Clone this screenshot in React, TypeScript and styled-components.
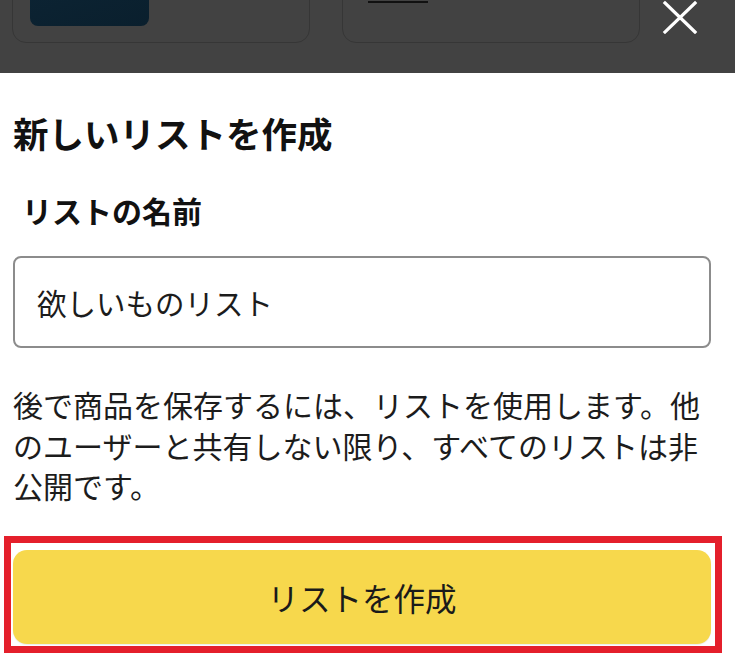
import React, { FC } from 'react';
import styled, { createGlobalStyle } from 'styled-components';

const GlobalStyle = createGlobalStyle`
  html, body {
    margin: 0;
    padding: 0;
    background: #ffffff;
  }
  body {
    font-family: "Noto Sans CJK JP", "Noto Sans", sans-serif;
    color: #111111;
  }
`;

const Backdrop = styled.div`
  display: flex;
  height: 73px;
  padding: 0 0 30px 12px;
  box-sizing: border-box;
  align-items: flex-end;
  background: #424242;
  overflow: hidden;
`;

const Card = styled.div`
  display: flex;
  width: 298px;
  height: 120px;
  flex-shrink: 0;
  margin-right: 32px;
  padding: 0 0 16px 17px;
  box-sizing: border-box;
  align-items: flex-end;
  border: 1.5px solid #363636;
  border-radius: 14px;
`;

const Thumb = styled.div`
  width: 119px;
  height: 100px;
  border-radius: 8px;
  background: linear-gradient(160deg, #0d2738 0%, #0a1f2d 100%);
`;

const LinkLine = styled.div`
  width: 60px;
  height: 2px;
  margin: 0 0 23px 8px;
  background: #111111;
`;

const CloseButton = styled.button`
  display: flex;
  width: 36px;
  height: 34px;
  margin: 0 0 9px -10px;
  padding: 0;
  border: none;
  background: transparent;
`;

const Sheet = styled.div`
  display: flex;
  padding: 35px 24px 0 13px;
  flex-direction: column;
`;

const Title = styled.h1`
  margin: 0;
  font-size: 35.5px;
  font-weight: 700;
  line-height: 49px;
  color: #111111;
`;

const Label = styled.label`
  margin: 33px 0 0 9px;
  font-size: 30px;
  font-weight: 700;
  line-height: 40px;
  color: #111111;
`;

const NameInput = styled.input`
  height: 92px;
  margin-top: 26px;
  padding: 0 20px 0 22px;
  box-sizing: border-box;
  border: 2px solid #8c8c8c;
  border-radius: 8px;
  font-family: "Noto Sans CJK JP", "Noto Sans", sans-serif;
  font-size: 29.5px;
  color: #1c1c1c;
  background: #ffffff;
  outline: none;
`;

const Note = styled.p`
  margin: 36px 0 0 0;
  font-size: 30px;
  line-height: 40.5px;
  color: #1c1c1c;
`;

const Highlight = styled.div`
  margin: 30px -11px 0 -9px;
  padding: 7px 4px 2px 2px;
  border: 7px solid #e41f2b;
`;

const PrimaryButton = styled.button`
  display: flex;
  width: 100%;
  height: 94px;
  justify-content: center;
  align-items: center;
  border: none;
  border-radius: 14px;
  background: #f7d84c;
  box-shadow: 0 1px 1px rgba(0, 0, 0, 0.08);
  font-family: "Noto Sans CJK JP", "Noto Sans", sans-serif;
  font-size: 31.5px;
  color: #1a1a1a;
`;

const App: FC = () => (
  <>
    <GlobalStyle />
    <Backdrop>
      <Card>
        <Thumb />
      </Card>
      <Card>
        <LinkLine />
      </Card>
      <CloseButton aria-label="閉じる">
        <svg width="36" height="34" viewBox="0 0 36 34">
          <path d="M3 3 L33 32 M33 3 L3 32" stroke="#ffffff" strokeWidth="3.2" strokeLinecap="square" />
        </svg>
      </CloseButton>
    </Backdrop>
    <Sheet>
      <Title>新しいリストを作成</Title>
      <Label htmlFor="list-name">リストの名前</Label>
      <NameInput id="list-name" defaultValue="欲しいものリスト" />
      <Note>
        後で商品を保存するには、リストを使用します。他のユーザーと共有しない限り、すべてのリストは非公開です。
      </Note>
      <Highlight>
        <PrimaryButton>リストを作成</PrimaryButton>
      </Highlight>
    </Sheet>
  </>
);

export default App;
